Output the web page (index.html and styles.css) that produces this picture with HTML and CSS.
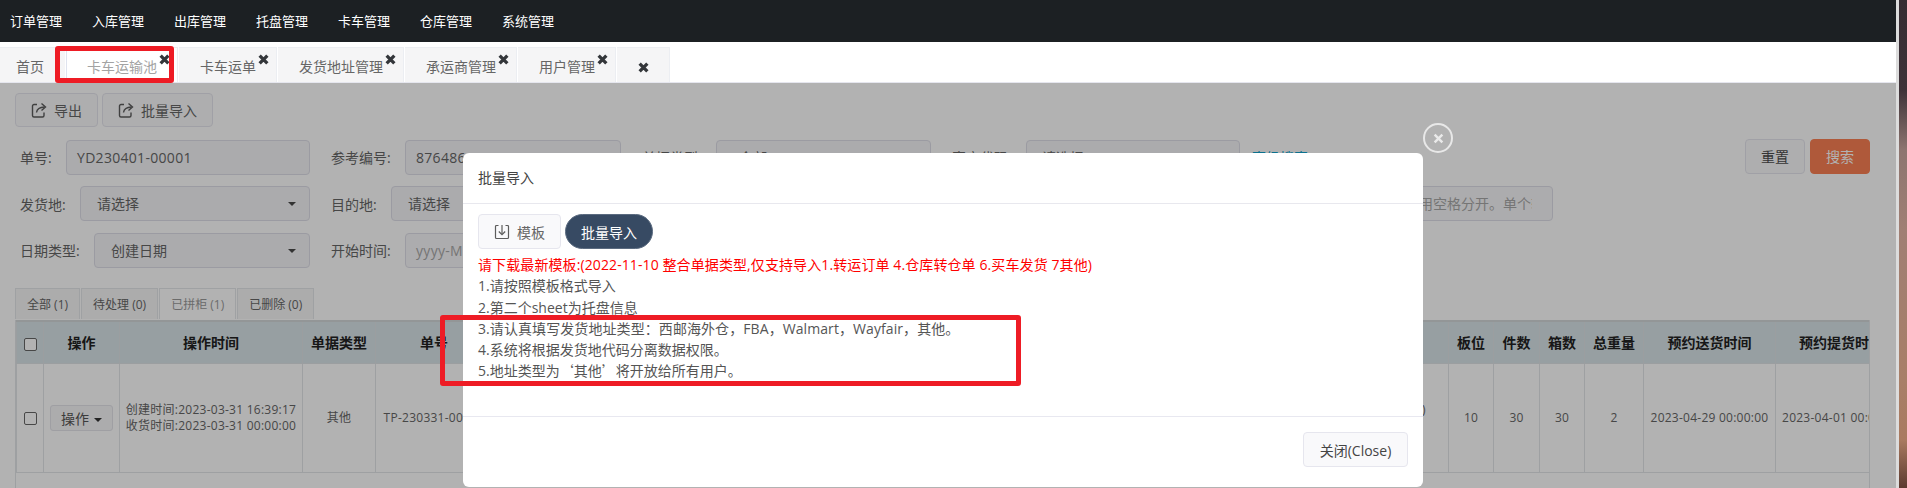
FILE: index.html
```html
<!DOCTYPE html>
<html lang="zh-CN">
<head>
<meta charset="utf-8">
<title>卡车运输池</title>
<link rel="stylesheet" href="styles.css">
</head>
<body>
<div class="app">
  <nav class="topnav">
    <a>订单管理</a><a>入库管理</a><a>出库管理</a><a>托盘管理</a><a>卡车管理</a><a>仓库管理</a><a>系统管理</a>
  </nav>
  <div class="pagetabs">
    <a class="ptab first">首页</a>
    <a class="ptab active">卡车运输池<svg class="tabx" viewBox="0 0 10 10"><path d="M1.5 1.5l7 7M8.5 1.5l-7 7"/></svg></a>
    <a class="ptab">卡车运单<svg class="tabx" viewBox="0 0 10 10"><path d="M1.5 1.5l7 7M8.5 1.5l-7 7"/></svg></a>
    <a class="ptab">发货地址管理<svg class="tabx" viewBox="0 0 10 10"><path d="M1.5 1.5l7 7M8.5 1.5l-7 7"/></svg></a>
    <a class="ptab">承运商管理<svg class="tabx" viewBox="0 0 10 10"><path d="M1.5 1.5l7 7M8.5 1.5l-7 7"/></svg></a>
    <a class="ptab">用户管理<svg class="tabx" viewBox="0 0 10 10"><path d="M1.5 1.5l7 7M8.5 1.5l-7 7"/></svg></a>
    <a class="ptab closeall"><svg class="tabx-static" viewBox="0 0 10 10"><path d="M1.5 1.5l7 7M8.5 1.5l-7 7"/></svg></a>
  </div>

  <main class="content">
    <div class="toolbar">
      <button class="btn"><svg class="ico" viewBox="0 0 16 16"><path d="M6 2.5H3A1.5 1.5 0 0 0 1.5 4v9.5A1.5 1.5 0 0 0 3 15h8.5a1.5 1.5 0 0 0 1.5-1.5V10.5"/><path d="M5.5 10.5C6 7 8.500 5.200 13.500 5"/><path d="M10.500 1.500 14.500 5l-4 3.500"/></svg>导出</button>
      <button class="btn"><svg class="ico" viewBox="0 0 16 16"><path d="M6 2.5H3A1.5 1.5 0 0 0 1.5 4v9.5A1.5 1.5 0 0 0 3 15h8.5a1.5 1.5 0 0 0 1.5-1.5V10.5"/><path d="M5.5 10.5C6 7 8.500 5.200 13.500 5"/><path d="M10.500 1.500 14.500 5l-4 3.500"/></svg>批量导入</button>
    </div>

    <form class="filters">
      <div class="frow">
        <label class="lab lab-a">单号:</label><div class="field f-no">YD230401-00001</div>
        <label class="lab lab-b">参考编号:</label><div class="field f-ref">87648610</div>
        <label class="lab lab-b">单据类型:</label><div class="field f-type">全部</div>
        <label class="lab lab-b">客户代码:</label><div class="field f-cust">请选择</div>
        <a class="adv">高级搜索</a>
        <div class="actions"><button class="btn act">重置</button><button class="btn act search">搜索</button></div>
      </div>
      <div class="frow">
        <label class="lab lab-c">发货地:</label><div class="field select f-from">请选择</div>
        <label class="lab lab-d">目的地:</label><div class="field select f-to">请选择</div>
        <label class="lab lab-e">单号列表:</label><div class="field ph f-list"><span class="ph-clip">多个单号请用空格分开。单个输入</span></div>
      </div>
      <div class="frow">
        <label class="lab lab-f">日期类型:</label><div class="field select f-date">创建日期</div>
        <label class="lab lab-b">开始时间:</label><div class="field ph f-ref">yyyy-MM-dd</div>
      </div>
    </form>

    <div class="subtabs">
      <a class="stab">全部 (1)</a><a class="stab">待处理 (0)</a><a class="stab on">已拼柜 (1)</a><a class="stab">已删除 (0)</a>
    </div>
    <div class="tablewrap">
      <table class="grid">
        <colgroup>
          <col class="c-check"><col class="c-op"><col class="c-time"><col class="c-type"><col class="c-no"><col class="c-ref"><col class="c-cust"><col class="c-name"><col class="c-from"><col class="c-to"><col class="c-pal"><col class="c-pcs"><col class="c-box"><col class="c-wt"><col class="c-del"><col class="c-pick">
        </colgroup>
        <thead>
          <tr><th><input type="checkbox" class="chk"></th><th>操作</th><th>操作时间</th><th>单据类型</th><th>单号</th><th>参考编号</th><th>客户代码</th><th>客户名称</th><th>发货地</th><th>目的地</th><th>板位</th><th>件数</th><th>箱数</th><th>总重量</th><th>预约送货时间</th><th>预约提货时间</th></tr>
        </thead>
        <tbody>
          <tr>
            <td><input type="checkbox" class="chk"></td>
            <td><button class="opbtn">操作<span class="caret"></span></button></td>
            <td>创建时间:2023-03-31 16:39:17<br>收货时间:2023-03-31 00:00:00</td>
            <td>其他</td>
            <td>TP-230331-00001</td>
            <td>87648610</td>
            <td>C0001</td>
            <td>西邮</td>
            <td>西邮海外仓</td>
            <td>美西海外仓(ONT8)<br>ONT8</td>
            <td>10</td><td>30</td><td>30</td><td>2</td>
            <td>2023-04-29 00:00:00</td>
            <td>2023-04-01 00:00:00</td>
          </tr>
        </tbody>
      </table>
    </div>
  </main>

  <div class="overlay">
    <section class="modal">
      <button class="modal-x"><svg viewBox="0 0 10 10"><path d="M1.5 1.5l7 7M8.5 1.5l-7 7"/></svg></button>
      <header class="modal-head">批量导入</header>
      <div class="modal-body">
        <div class="modal-tools">
          <button class="btn tpl"><svg class="ico dl" viewBox="0 0 16 16"><path d="M4.500 1.500H2.500a1 1 0 0 0-1 1v11a1 1 0 0 0 1 1h11a1 1 0 0 0 1-1v-11a1 1 0 0 0-1-1h-2"/><path d="M8 1v9"/><path d="M4.800 7.500 8 10.700l3.200-3.200"/></svg>模板</button>
          <button class="pill">批量导入</button>
        </div>
        <p class="note red">请下载最新模板:(2022-11-10 整合单据类型,仅支持导入1.转运订单 4.仓库转仓单 6.买车发货 7其他)</p>
        <p class="note">1.请按照模板格式导入</p>
        <p class="note">2.第二个sheet为托盘信息</p>
        <p class="note wide">3.请认真填写发货地址类型：西邮海外仓，FBA，Walmart，Wayfair，其他。</p>
        <p class="note">4.系统将根据发货地代码分离数据权限。</p>
        <p class="note">5.地址类型为<span class="cjk">‘</span>其他<span class="cjk">’</span>将开放给所有用户。</p>
      </div>
      <footer class="modal-foot"><button class="btn closebtn">关闭(Close)</button></footer>
    </section>
  </div>

  <div class="mark mark-tab"></div>
  <div class="mark mark-notes"></div>
</div>
<div class="edge"></div>
</body>
</html>
```
FILE: styles.css
```css
* { box-sizing: border-box; }
html, body { margin: 0; height: 488px; overflow: hidden; }
body {
  display: flex;
  font-family: "Open Sans", "Noto Sans CJK SC", sans-serif;
  font-size: 14px;
  color: #676a6c;
  background: #3a3035;
}
button { font-family: inherit; }

.app { position: relative; width: 1896px; height: 488px; overflow: hidden; background: #fff; flex: none; }
.edge {
  flex: 1;
  border-left: 3px solid #dcdcdc;
  background: linear-gradient(180deg, #352c32 0, #3e3238 90px, #8d7570 150px, #a07f74 230px, #a87f68 380px, #a97a60 440px, #5c3a30 488px);
}

/* top nav */
.topnav { height: 42px; background: #1c2023; display: flex; align-items: center; padding-left: 10px; gap: 30px; }
.topnav a { color: #fff; font-size: 13px; line-height: 20px; }

/* page tabs */
.pagetabs { height: 41px; padding-top: 5px; display: flex; gap: 1px; border-bottom: 1px solid #e5e6ee; background: #fff; }
.ptab {
  position: relative; height: 35px; padding: 4px 20px 0 21px; line-height: 29px; font-size: 14px;
  background: #f5f5f6; color: #666; border: 1px solid #eceef2; border-width: 1px 1px 0 0; white-space: nowrap;
}
.ptab.first { padding-left: 16px; width: 65px; padding-right: 0; border-right: 0; }
.ptab.active { background: #fff; color: #a3a3a3; border-left: 1px solid #dfe3ee; padding-left: 20px; }
.ptab.closeall { width: 53px; padding: 4px 0 0; display: flex; align-items: center; justify-content: center; }
.tabx { position: absolute; right: 7px; top: 6px; width: 11px; height: 11px; }
.tabx-static { width: 11px; height: 11px; }
.tabx path, .tabx-static path { stroke: #33363a; stroke-width: 3; fill: none; }

/* content */
.content { padding: 10px 26px 0 15px; }
.toolbar { display: flex; gap: 4px; margin-bottom: 13px; }
.btn {
  height: 34px; padding: 0 15px; display: inline-flex; align-items: center; justify-content: center;
  background: #f9f9fb; border: 1px solid #e6e6ee; border-radius: 4px; color: #666; font-size: 14px;
}
.ico { width: 16px; height: 16px; margin-right: 7px; fill: none; stroke: #5c5c5c; stroke-width: 1.4; flex: none; }

.frow { display: flex; align-items: center; height: 34px; margin-bottom: 12.5px; position: relative; }
.lab { font-size: 14px; color: #666; white-space: nowrap; padding-left: 5px; }
.lab-a { width: 51px; }
.lab-b { width: 95px; padding-left: 21px; }
.lab-c { width: 65px; }
.lab-d { width: 81px; padding-left: 21px; }
.lab-e { width: 95px; padding-left: 21px; }
.lab-f { width: 79px; }
.field {
  height: 35px; line-height: 33px; padding: 0 10px; border: 1px solid #dfdfe8; border-radius: 4px;
  background: #f5f5f8; color: #666; font-size: 14px; letter-spacing: .3px; position: relative; flex: none; overflow: hidden; white-space: nowrap;
}
.select { padding-left: 16px; letter-spacing: 0; }
.select::after {
  content: ""; position: absolute; right: 13px; top: 15px;
  border: 4px solid transparent; border-top-color: #4a4a4a; border-bottom: 0;
}
.ph { color: #a8a8a8; background: #f7f7f9; }
.f-no { width: 244px; }
.f-ref { width: 216px; }
.f-type { width: 215px; padding-left: 22px; }
.f-cust { width: 214px; padding-left: 15px; letter-spacing: 0; }
.f-from { width: 230px; }
.f-to { width: 230px; }
.f-date { width: 216px; }
.f-list { width: 837px; padding-left: 632px; padding-right: 20px; letter-spacing: 0; }
.ph-clip { display: block; overflow: hidden; }
.adv { margin-left: 12px; color: #10a2cc; font-size: 14px; }
.actions { margin-left: auto; display: flex; gap: 5px; margin-top: -2px; }
.act { width: 60px; padding: 0; height: 35px; color: #4c4c4c; }
.search { background: #fb8053; border-color: #fb8053; color: #fff; }

/* sub tabs + table */
.subtabs { display: flex; gap: 1px; margin-top: 21px; height: 32px; padding-bottom: 1px; }
.stab {
  height: 31px; padding: 0 11px; line-height: 31px; font-size: 12px; white-space: nowrap;
  background: #f7f7f7; border: 1px solid #e4e7ea; border-bottom: 0; color: #666;
}
.stab.on { background: #fff; color: #9a9a9a; }
.tablewrap { width: 1855px; height: 200px; overflow: hidden; border: 1px solid #e2e5e8; border-width: 0 1px; }
.grid { table-layout: fixed; width: 1890px; border-collapse: collapse; font-size: 12px; letter-spacing: .25px; color: #666; }
.c-check { width: 27px; } .c-op { width: 76px; } .c-time { width: 183px; } .c-type { width: 73px; }
.c-no { width: 117px; } .c-ref { width: 200px; } .c-cust { width: 200px; } .c-name { width: 200px; } .c-from { width: 209px; }
.c-to { width: 147px; } .c-pal { width: 45px; } .c-pcs { width: 46px; } .c-box { width: 45px; }
.c-wt { width: 59px; } .c-del { width: 132px; } .c-pick { width: 131px; }
.grid th {
  height: 42px; background: #d9e4e8; border: 1px solid #dfe3e6; border-top: 2px solid #d3d7d9;
  font-size: 14px; font-weight: 700; letter-spacing: 0; color: #222; text-align: center; padding: 0; white-space: nowrap; overflow: hidden;
}
.grid td {
  height: 109px; border: 1px solid #e2e5e8; text-align: center; padding: 0; white-space: nowrap; overflow: hidden; line-height: 16px;
}
.chk { width: 13px; height: 13px; margin: 0; vertical-align: middle; appearance: none; border: 1px solid #666; border-radius: 2px; background: #fff; }
.opbtn {
  width: 63px; height: 26px; padding: 0; background: #f7f7f8; border: 1px solid #e4e4ea; border-radius: 3px;
  font-size: 14px; color: #555;
}
.caret { display: inline-block; margin-left: 5px; vertical-align: middle; border: 4px solid transparent; border-top-color: #333; border-bottom: 0; }

/* modal */
.overlay { position: absolute; left: 0; right: 0; top: 83px; bottom: 0; background: rgba(0,0,0,.3); }
.modal {
  position: absolute; left: 463px; top: 70px; width: 960px; height: 334px;
  background: #fff; border-radius: 6px; display: flex; flex-direction: column;
}
.modal-x {
  position: absolute; right: -30px; top: -30px; width: 30px; height: 30px; padding: 0;
  background: transparent; border: 2px solid #e8e8e8; border-radius: 50%; display: flex; align-items: center; justify-content: center;
}
.modal-x svg { width: 11px; height: 11px; }
.modal-x path { stroke: #eaeaea; stroke-width: 2.2; fill: none; }
.modal-head { height: 51px; padding: 0 15px; line-height: 50px; color: #444; font-size: 14px; border-bottom: 1px solid #e8e8ee; flex: none; }
.modal-body { flex: 1; padding: 10px 15px 0; }
.modal-tools { display: flex; gap: 4px; margin-bottom: 5px; }
.tpl { width: 83px; height: 35px; padding: 0; }
.dl { stroke-width: 1.2; }
.pill { width: 88px; height: 35px; padding: 0; border: 1px solid #5b6b80; border-radius: 18px; background: #374a63; color: #fff; font-size: 14px; }
.note { margin: 0; font-size: 14px; line-height: 21.3px; color: #555; white-space: nowrap; }
.wide { letter-spacing: .08px; }
.cjk { font-family: "Noto Sans CJK SC", sans-serif; }
.red { color: #f00; letter-spacing: .1px; }
.modal-foot { height: 71px; flex: none; border-top: 1px solid #e8e8f0; padding: 15px 15px 0 0; display: flex; justify-content: flex-end; }
.closebtn { width: 105px; height: 35px; padding: 0; color: #444; }

/* red annotations */
.mark { position: absolute; border: 5px solid #ee1c25; border-radius: 3px; }
.mark-tab { left: 55px; top: 46px; width: 119px; height: 37px; }
.mark-notes { left: 440px; top: 315px; width: 581px; height: 71px; }
```
